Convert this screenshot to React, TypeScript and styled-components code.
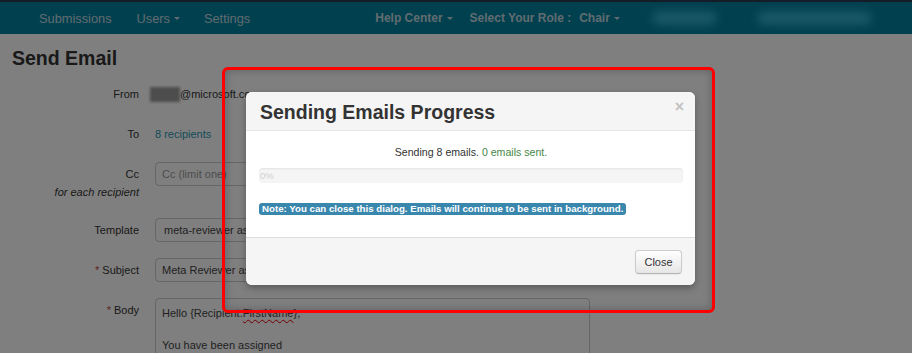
import styled, { createGlobalStyle } from "styled-components";

const GlobalStyle = createGlobalStyle`
  html, body {
    margin: 0;
    padding: 0;
    background: #fff;
    font-family: "Liberation Sans", Arial, sans-serif;
    color: #333;
  }
  #root {
    position: relative;
    width: 912px;
    height: 353px;
    overflow: hidden;
  }
`;

const Navbar = styled.header`
  height: 32px;
  border-top: 2px solid #2c3850;
  background-color: #00809e;
  display: flex;
  align-items: center;
  padding-left: 39px;
  font-size: 12.8px;
  color: #c0d8de;
`;

const NavItem = styled.span<{ $bold?: boolean; $width?: number }>`
  font-weight: ${props => (props.$bold ? "bold" : "normal")};
  font-size: ${props => (props.$bold ? "12px" : "12.8px")};
  margin-right: ${props => props.$width ?? 0}px;
  white-space: nowrap;
  display: flex;
  align-items: center;
`;

const Caret = styled.span`
  display: inline-block;
  margin-left: 4px;
  width: 0;
  height: 0;
  border-left: 3px solid transparent;
  border-right: 3px solid transparent;
  border-top: 3px solid #c0d8de;
`;

const Blurred = styled.span<{ $w: number }>`
  width: ${props => props.$w}px;
  height: 14px;
  border-radius: 7px;
  background: #33b0cc;
  filter: blur(5px);
  margin-right: 40px;
`;

const Page = styled.main`
  padding: 12px 12px 0;
`;

const Title = styled.h1`
  margin: 0 0 12px;
  font-size: 19.5px;
  line-height: 24px;
  font-weight: bold;
  color: #333;
`;

const Form = styled.div`
  display: flex;
  flex-direction: column;
  gap: 16px;
`;

const Row = styled.div`
  display: grid;
  grid-template-columns: 127px 435px;
  column-gap: 16px;
  align-items: start;
`;

const Label = styled.div`
  text-align: right;
  font-size: 11px;
  line-height: 24px;
  color: #333;
`;

const Help = styled.div`
  font-style: italic;
  font-size: 11px;
  line-height: 12px;
  margin-bottom: 4px;
`;

const Required = styled.span`
  color: #b94a48;
  margin-right: 3px;
`;

const Value = styled.div`
  font-size: 11px;
  line-height: 24px;
  display: flex;
  align-items: center;
`;

const Hidden = styled.span`
  display: inline-block;
  width: 30px;
  height: 15px;
  margin-left: -5px;
  background: #9a9a9a;
  filter: blur(1.5px);
`;

const Link = styled.a`
  color: #2a98b0;
  text-decoration: none;
`;

const Input = styled.div<{ $placeholder?: boolean; $indent?: number }>`
  height: 22px;
  border: 1px solid #ccc;
  border-radius: 4px;
  padding-left: ${props => props.$indent ?? 6}px;
  font-size: 11px;
  line-height: 22px;
  color: ${props => (props.$placeholder ? "#999" : "#444")};
  white-space: nowrap;
  overflow: hidden;
`;

const TextArea = styled.div`
  height: 80px;
  border: 1px solid #ccc;
  border-radius: 4px;
  padding: 6px 6px;
  font-size: 11px;
  line-height: 16px;
  color: #444;
`;

const Squiggle = styled.span`
  text-decoration: underline wavy #d00;
  text-decoration-thickness: 1px;
  text-underline-offset: 2px;
`;

const Overlay = styled.div`
  position: absolute;
  inset: 0;
  background: rgba(0, 0, 0, 0.5);
`;

const Annotation = styled.div`
  position: absolute;
  left: 222px;
  top: 67px;
  width: 487px;
  height: 240px;
  border: 3px solid #f00;
  border-radius: 6px;
  box-shadow: inset 0 0 8px rgba(0, 0, 0, 0.25);
`;

const Modal = styled.div`
  position: absolute;
  left: 246px;
  top: 92px;
  width: 449px;
  border-radius: 6px;
  background: #fff;
  box-shadow: 0 3px 7px rgba(0, 0, 0, 0.3);
  overflow: hidden;
`;

const ModalHeader = styled.div`
  height: 38px;
  border-bottom: 1px solid #e5e5e5;
  background: #f5f5f5;
  display: flex;
  align-items: center;
  justify-content: space-between;
  padding: 0 11px 0 14px;
`;

const ModalTitle = styled.h3`
  margin: 0;
  font-size: 19.5px;
  font-weight: bold;
  color: #333;
  padding-top: 3px;
`;

const CloseX = styled.span`
  font-size: 16px;
  font-weight: bold;
  color: #c2c2c2;
  margin-top: -8px;
`;

const ModalBody = styled.div`
  padding: 14px 12px 21px 13px;
`;

const Status = styled.div`
  text-align: center;
  font-size: 10.6px;
  line-height: 14px;
  color: #333;
`;

const Sent = styled.span`
  color: #468847;
`;

const Progress = styled.div`
  margin-top: 9px;
  height: 15px;
  border-radius: 4px;
  background: #f5f5f5;
  box-shadow: inset 0 1px 2px rgba(0, 0, 0, 0.08);
  font-size: 9.5px;
  line-height: 15px;
  color: #d0d0d0;
  padding-left: 1px;
`;

const Note = styled.span`
  display: inline-block;
  margin-top: 20px;
  padding: 0 3px;
  border-radius: 3px;
  background: #3a87ad;
  color: #fff;
  font-size: 9.7px;
  font-weight: bold;
  line-height: 12px;
`;

const ModalFooter = styled.div`
  height: 47px;
  border-top: 1px solid #ddd;
  background: #f5f5f5;
  display: flex;
  align-items: center;
  justify-content: flex-end;
  padding-right: 13px;
`;

const Button = styled.button`
  height: 24px;
  width: 47px;
  border: 1px solid #ccc;
  border-bottom-color: #b3b3b3;
  border-radius: 4px;
  background: linear-gradient(#ffffff, #e6e6e6);
  box-shadow: inset 0 1px 0 rgba(255, 255, 255, 0.2), 0 1px 2px rgba(0, 0, 0, 0.05);
  font-family: "Liberation Sans", Arial, sans-serif;
  font-size: 11px;
  color: #333;
  padding: 0;
`;

export default function App() {
  return (
    <>
      <GlobalStyle />
      <Navbar>
        <NavItem $width={25}>Submissions</NavItem>
        <NavItem $width={24}>
          Users <Caret />
        </NavItem>
        <NavItem $width={125}>Settings</NavItem>
        <NavItem $bold $width={17}>
          Help Center<Caret />
        </NavItem>
        <NavItem $bold $width={8}>Select Your Role :</NavItem>
        <NavItem $bold $width={32}>
          Chair <Caret />
        </NavItem>
        <Blurred $w={70} />
        <Blurred $w={125} />
      </Navbar>
      <Page>
        <Title>Send Email</Title>
        <Form>
          <Row>
            <Label>From</Label>
            <Value>
              <Hidden />@microsoft.com
            </Value>
          </Row>
          <Row>
            <Label>To</Label>
            <Value>
              <Link>8 recipients</Link>
            </Value>
          </Row>
          <Row>
            <Label>
              Cc
              <Help>for each recipient</Help>
            </Label>
            <Input $placeholder>Cc (limit one)</Input>
          </Row>
          <Row>
            <Label>Template</Label>
            <Input $indent={8}>meta-reviewer assignment</Input>
          </Row>
          <Row>
            <Label>
              <Required>*</Required>Subject
            </Label>
            <Input>Meta Reviewer assignment</Input>
          </Row>
          <Row>
            <Label>
              <Required>*</Required>Body
            </Label>
            <TextArea>
              Hello {"{"}Recipient.<Squiggle>FirstName</Squiggle>{"}"},
              <br />
              <br />
              You have been assigned
            </TextArea>
          </Row>
        </Form>
      </Page>
      <Overlay />
      <Annotation />
      <Modal>
        <ModalHeader>
          <ModalTitle>Sending Emails Progress</ModalTitle>
          <CloseX>×</CloseX>
        </ModalHeader>
        <ModalBody>
          <Status>
            Sending 8 emails. <Sent>0 emails sent.</Sent>
          </Status>
          <Progress>0%</Progress>
          <Note>Note: You can close this dialog. Emails will continue to be sent in background.</Note>
        </ModalBody>
        <ModalFooter>
          <Button>Close</Button>
        </ModalFooter>
      </Modal>
    </>
  );
}
